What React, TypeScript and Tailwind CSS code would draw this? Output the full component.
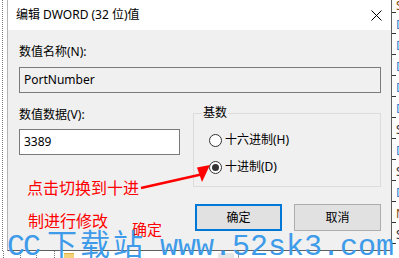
import React from "react";

const stripRows: { ch: string; color: string }[] = [
  { ch: "D", color: "#1f7fd6" },
  { ch: "D", color: "#1f7fd6" },
  { ch: "D", color: "#1f7fd6" },
  { ch: "D", color: "#1f7fd6" },
  { ch: "D", color: "#1f7fd6" },
  { ch: "S", color: "#333333" },
  { ch: "D", color: "#1f7fd6" },
  { ch: "S", color: "#333333" },
  { ch: "D", color: "#1f7fd6" },
  { ch: "N", color: "#7a4a10" },
  { ch: "S", color: "#333333" },
  { ch: "D", color: "#1f7fd6" },
];

function Radio({ checked, label }: { checked?: boolean; label: string }) {
  return (
    <div className="flex items-center h-[16px]">
      <div className="w-[13px] h-[13px] rounded-full border border-[#333333] bg-white flex items-center justify-center">
        {checked && <div className="w-[7px] h-[7px] rounded-full bg-[#333333]" />}
      </div>
      <span className="ml-[3px]">{label}</span>
    </div>
  );
}

export default function App() {
  return (
    <div className="relative w-[399px] h-[258px] overflow-hidden bg-white font-['Noto_Sans','Noto_Sans_CJK_SC',sans-serif] text-[12px] leading-[16px] text-black">
      <div className="flex h-[251px]">
        {/* left background strip */}
        <div className="w-[7px] h-full pl-[2px]">
          <div className="h-full border-l border-dotted border-[#7a7a7a]" />
        </div>

        {/* dialog */}
        <div className="w-[385px] h-full flex flex-col border-l border-l-[#b4b4b4] border-r border-r-[#5f5f5f] border-b border-b-[#5f5f5f]">
          <div className="h-[30px] bg-white flex items-center justify-between pl-[8px] pr-[9px]">
            <span>编辑 DWORD (32 位)值</span>
            <svg width="11" height="11" viewBox="0 0 11 11">
              <path d="M0.5 0.5L10.5 10.5M10.5 0.5L0.5 10.5" stroke="#000" strokeWidth="1" />
            </svg>
          </div>
          <div className="flex-1 bg-[#f0f0f0] pl-[11px] pr-[10px] pt-[14px]">
            <div>数值名称(N):</div>
            <div className="mt-[7px] h-[26px] border border-[#7a7a7a] bg-[#f0f0f0] flex items-center pl-[4px]">
              PortNumber
            </div>
            <div className="mt-[12px] flex">
              <div className="w-[161px] flex flex-col">
                <div className="pt-[2px]">数值数据(V):</div>
                <div className="mt-[6px] h-[26px] border border-[#7a7a7a] bg-white flex items-center pl-[4px]">
                  3389
                </div>
              </div>
              <div className="ml-[13px] flex-1 pt-[8px]">
                <div className="relative h-[74px] border border-[#dcdcdc] pl-[15px] pt-[18px] flex flex-col gap-[11px]">
                  <span className="absolute -top-[9px] left-[8px] bg-[#f0f0f0] px-[1px]">基数</span>
                  <Radio label="十六进制(H)" />
                  <Radio checked label="十进制(D)" />
                </div>
              </div>
            </div>
            <div className="mt-[17px] flex justify-end gap-[12px]">
              <div className="w-[87px] h-[27px] bg-[#e1e1e1] border-2 border-[#0078d7] flex items-center justify-center">
                确定
              </div>
              <div className="w-[87px] h-[27px] bg-[#e1e1e1] border border-[#adadad] flex items-center justify-center">
                取消
              </div>
            </div>
          </div>
        </div>

        {/* right background strip */}
        <div className="w-[7px] h-full overflow-hidden flex flex-col bg-white">
          <div className="h-[15px] pl-[4px] text-[12px] leading-[12px] text-[#7a4a10]">S</div>
          {stripRows.map((r, i) => (
            <div key={i} className="h-[21px] shrink-0 flex flex-col">
              <div className="w-[4px] h-px bg-[#333333]" />
              <span className="ml-[4px] mt-[6px] text-[12px] leading-[12px]" style={{ color: r.color }}>
                {r.ch}
              </span>
            </div>
          ))}
        </div>
      </div>

      {/* bottom background strip */}
      <div className="h-[7px] flex">
        <div className="ml-[3px] h-full border-l border-dotted border-[#7a7a7a]" />
        <div className="ml-[16px] h-full border-l border-dotted border-[#7a7a7a]" />
        <div className="ml-[15px] h-full border-l border-dotted border-[#7a7a7a]" />
        <div className="ml-[17px] h-full border-l border-dotted border-[#7a7a7a]" />
        <div className="ml-[9px] mt-[2px] w-[10px] h-[5px] bg-[#f3d27a] border-t border-[#e0b040]" />
        <div className="ml-[144px] mt-[2px] w-[16px] h-[5px] bg-[#e6e6e6]" />
        <div className="ml-[4px] h-full border-l border-[#9a9a9a]" />
      </div>

      {/* red annotations */}
      <div className="absolute left-[27px] top-[179px] font-['Noto_Sans_CJK_SC',sans-serif] text-[16px] leading-[16px] text-[#ff0000]">
        点击切换到十进
      </div>
      <div className="absolute left-[28px] top-[212px] font-['Noto_Sans_CJK_SC',sans-serif] text-[16px] leading-[16px] text-[#ff0000]">
        制进行修改
      </div>
      <div className="absolute left-[132px] top-[221px] font-['Noto_Sans_CJK_SC',sans-serif] text-[15px] leading-[15px] text-[#ff0000]">
        确定
      </div>
      <svg className="absolute left-0 top-0 pointer-events-none" width="399" height="258" viewBox="0 0 399 258">
        <line x1="141" y1="188" x2="201" y2="174.5" stroke="#ff0000" strokeWidth="2.5" />
        <polygon points="210,165 197,167.5 202,182" fill="#ff0000" />
      </svg>

      {/* watermark */}
      <div className="absolute left-[7px] top-[227px] flex items-baseline text-[#3d9be9] pointer-events-none whitespace-pre">
        <span className="font-['Liberation_Mono',monospace] text-[30px] leading-[30px] tracking-[-2px]">CC</span>
        <span className="ml-[8px] font-['Noto_Sans_CJK_SC',sans-serif] text-[30px] leading-[30px] tracking-[3px]">下载站</span>
        <span className="ml-[14px] font-['Liberation_Mono',monospace] text-[30px] leading-[30px]">www.52sk3.com</span>
      </div>
    </div>
  );
}
